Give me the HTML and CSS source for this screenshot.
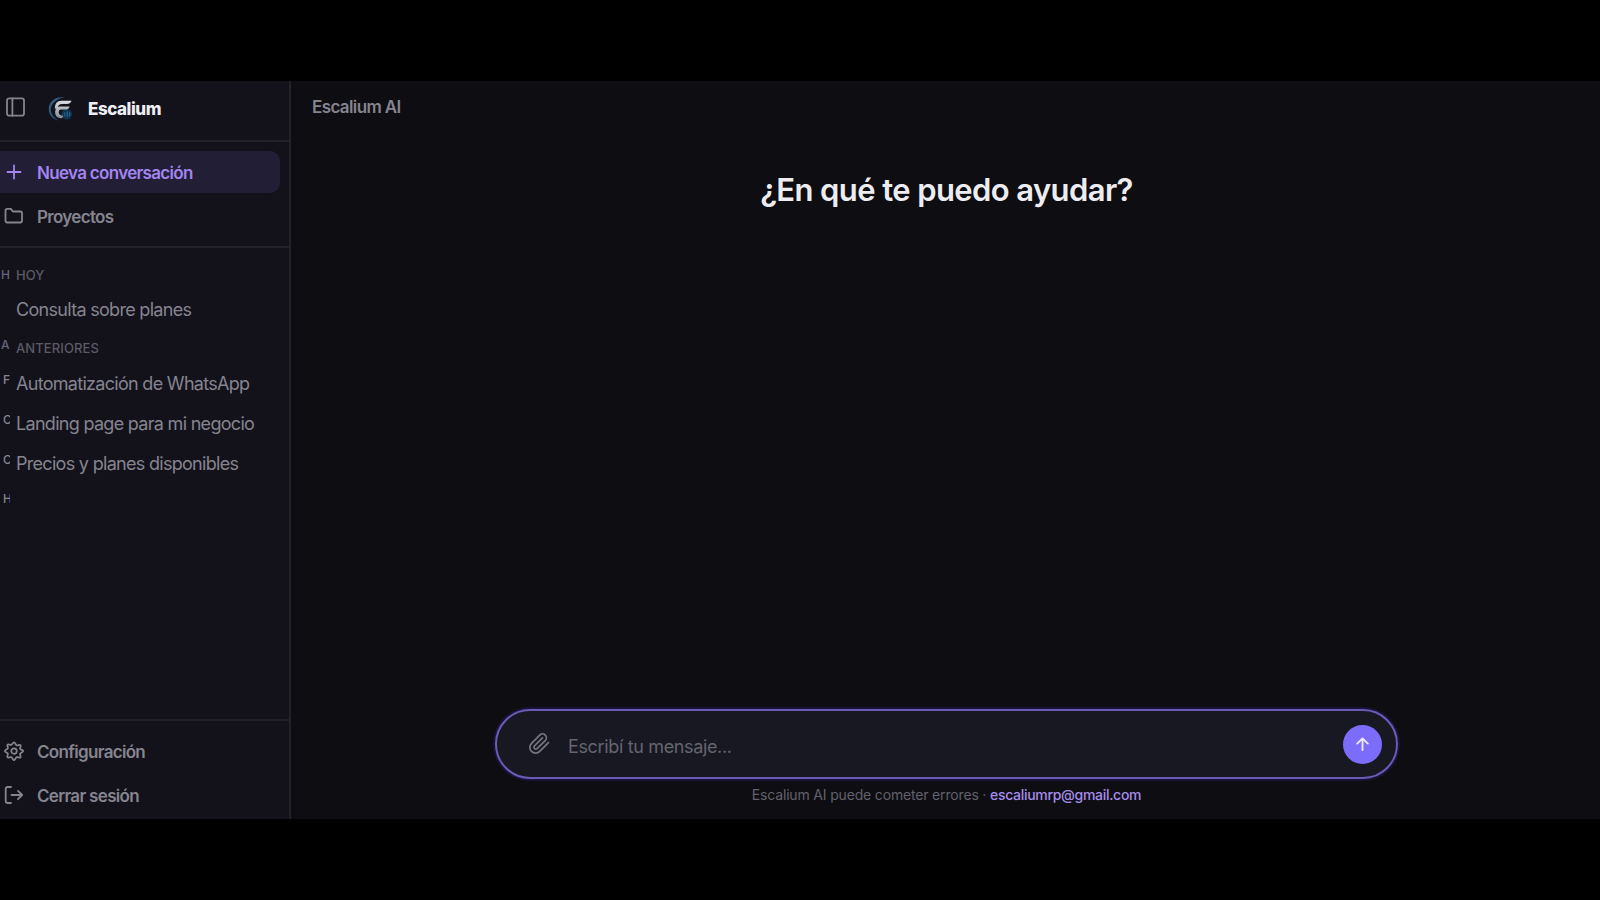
FILE: index.html
```html
<!DOCTYPE html>
<html lang="es">
<head>
<meta charset="utf-8">
<title>Escalium AI</title>
<link rel="stylesheet" href="styles.css">
</head>
<body>
<div class="app">
  <aside class="sidebar">
    <header class="brand">
      <svg class="icon panel" viewBox="0 0 20 20"><rect x="1" y="1.300" width="17" height="17.400" rx="2.200"/><path d="M6.400 1.300v17.400"/></svg>
      <svg class="logo" viewBox="0 0 26 28">
        <defs>
          <linearGradient id="ring" x1="0" y1="0" x2="1" y2="1"><stop offset="0" stop-color="#3c647f"/><stop offset=".5" stop-color="#28577b"/><stop offset="1" stop-color="#123047"/></linearGradient>
          <linearGradient id="metal" x1="0" y1="0" x2="0" y2="1"><stop offset="0" stop-color="#d8dce2"/><stop offset="1" stop-color="#858c96"/></linearGradient>
        </defs>
        <path d="M17 1.500C9 -.2 1 5 .8 13c-.2 6.500 4 11 10 12.500C5.500 21.500 2.200 17.500 3 12.500 4 7 10 2.500 17 1.500Z" fill="url(#ring)"/>
        <circle cx="19.500" cy="19" r="5.500" fill="#113450"/>
        <path d="M24.500 5C23.500 7.500 22 8.300 20 8.300h-5.500c-3 0-3.600 1.300-4.500 4.200l-3 .8C7.200 8 9.500 5 14 5ZM22.500 11c-.8 2.100-1.800 2.900-3.500 2.900h-5c-2 0-2.800.8-2.800 2.600 0 2.700 1.500 3.800 4.800 4l-1.500 2.500c-4.500 0-7-2.300-7-6 0-3.800 2-6 5.500-6Z" fill="url(#metal)"/>
        <path d="M17.500 17v4M20 16v6M22.500 17v4" stroke="#2b6f96" stroke-width="1"/>
      </svg>
      <span class="brand-name">Escalium</span>
    </header>
    <nav class="nav">
      <a class="item active"><svg class="icon" viewBox="0 0 20 20"><path d="M10 3.500v13M3.500 10h13"/></svg><span>Nueva conversación</span></a>
      <a class="item"><svg class="icon" viewBox="0 0 20 20"><path d="M1.500 14.800V4.600c0-1 .7-1.700 1.700-1.700h3.700l2 2.600h7.400c1 0 1.700.7 1.700 1.700v7.600c0 1-.7 1.700-1.700 1.700H3.200c-1 0-1.700-.7-1.700-1.700Z"/></svg><span>Proyectos</span></a>
    </nav>
    <section class="history">
      <div class="row label hoy"><span class="mark">H</span><span>HOY</span></div>
      <div class="row chat"><span class="mark"></span><span>Consulta sobre planes</span></div>
      <div class="row label"><span class="mark">A</span><span class="lower">ANTERIORES</span></div>
      <div class="row chat"><span class="mark cut">F</span><span>Automatización de WhatsApp</span></div>
      <div class="row chat"><span class="mark cut">C</span><span>Landing page para mi negocio</span></div>
      <div class="row chat"><span class="mark cut">C</span><span>Precios y planes disponibles</span></div>
      <div class="row chat last"><span class="mark cut">H</span></div>
    </section>
    <nav class="account">
      <a class="item"><svg class="icon gear" viewBox="0 0 24 24"><path d="M12 1.700c1.700 0 1.700 3 3.200 3.600s3.300-1.400 4.500-.3-.9 3-.3 4.500 3.600.8 3.600 2.500-3 1.700-3.600 3.200 1.400 3.300.3 4.500-3-.9-4.500-.3-1.500 3.600-3.200 3.600-1.700-3-3.200-3.600-3.300 1.400-4.500.3.900-3 .3-4.500S1 13.700 1 12s3-1.700 3.600-3.200S3.200 5.500 4.300 4.300s3 .9 4.500.3S10.300 1.700 12 1.700Z"/><circle cx="12" cy="12" r="3.300"/></svg><span>Configuración</span></a>
      <a class="item"><svg class="icon" viewBox="0 0 20 20"><path d="M7 2H3.800C2.500 2 1.700 2.800 1.700 4v12c0 1.200.8 2 2.100 2H7M7.500 10H18M14 5.800l4.200 4.200-4.200 4.200"/></svg><span>Cerrar sesión</span></a>
    </nav>
  </aside>
  <main class="main">
    <div class="topbar">Escalium AI</div>
    <h1 class="title">¿En qué te puedo ayudar?</h1>
    <div class="composer">
      <svg class="clip" viewBox="0 0 24 24"><path d="m21.400 11.100-9.200 9.200a6 6 0 0 1-8.500-8.500l8.600-8.600a4 4 0 0 1 5.700 5.700l-8.600 8.500a2 2 0 0 1-2.800-2.800l8.500-8.500"/></svg>
      <span class="placeholder">Escribí tu mensaje...</span>
      <button class="send" aria-label="Enviar"><svg viewBox="0 0 16 16"><path d="M8 14.500V2M2.300 7.600 8 2l5.700 5.600"/></svg></button>
    </div>
    <p class="note">Escalium AI puede cometer errores · <a class="mail">escaliumrp@gmail.com</a></p>
  </main>
</div>
</body>
</html>
```
FILE: styles.css
```css
* { box-sizing: border-box; }
body {
  margin: 0;
  height: 900px;
  padding: 81px 0;
  overflow: hidden;
  background: #000;
  font-family: Inter, "Liberation Sans", sans-serif;
  color: #85848f;
}
.app { display: flex; height: 738px; background: #0e0d12; }
.sidebar {
  display: flex;
  flex-direction: column;
  width: 291px;
  flex: none;
  background: #13121b;
  border-right: 2px solid #232229;
}
.icon {
  width: 20px;
  height: 20px;
  flex: none;
  fill: none;
  stroke: currentColor;
  stroke-width: 1.8;
  stroke-linecap: round;
  stroke-linejoin: round;
}
.gear { stroke-width: 2.1; }
.panel { margin-top: -1px; }
.brand {
  display: flex;
  align-items: center;
  height: 61px;
  padding: 0 0 6px 6px;
  border-bottom: 2px solid #232229;
}
.logo { width: 25px; height: 27px; margin: 3px 0 0 22px; }
.brand-name { margin: 3px 0 0 15px; font-size: 17px; font-weight: 800; color: #ededf3; letter-spacing: -0.45px; }
.nav { height: 106px; padding-top: 9px; border-bottom: 2px solid #232229; }
.item {
  display: flex;
  align-items: center;
  gap: 13px;
  width: 280px;
  height: 42px;
  margin-bottom: 2px;
  padding-left: 4px;
  font-size: 17px;
  font-weight: 600;
  letter-spacing: -0.68px;
  white-space: nowrap;
}
.item span { margin-top: 2px; }
.active { background: #221e36; color: #a285ee; border-radius: 0 10px 10px 0; }
.history { flex: 1; padding-top: 14px; }
.row { display: flex; align-items: center; height: 40px; white-space: nowrap; }
.label { height: 34px; font-size: 13px; font-weight: 500; letter-spacing: 0.1px; color: #5b5a65; }
.hoy { height: 26px; }
.chat { font-size: 18px; letter-spacing: -0.7px; }
.chat span + span { margin-top: 2px; }
.lower { margin-top: 5px; }
.mark {
  width: 10px;
  margin: -2px 6px 0 0;
  padding-left: 1px;
  font-size: 12px;
  font-weight: 500;
  letter-spacing: 0;
  color: #67647c;
}
.cut { padding-left: 3px; margin-top: -6px; overflow: hidden; color: #85848f; }
.last { height: 38px; }
.account { height: 100px; padding-top: 9px; border-top: 2px solid #232229; }
.main { display: flex; flex: 1; flex-direction: column; align-items: center; }
.topbar { align-self: stretch; height: 51px; padding: 16px 0 0 21px; font-size: 17px; line-height: 21px; font-weight: 600; letter-spacing: -0.62px; }
.title { margin: 38px 0 0 2px; font-size: 31px; line-height: 40px; font-weight: 600; letter-spacing: -0.6px; color: #ededf1; white-space: nowrap; }
.composer {
  display: flex;
  align-items: center;
  width: 903px;
  height: 70px;
  margin: auto 0 0 2px;
  padding: 0 14px 0 31px;
  border: 2px solid #6c5bb5;
  border-radius: 35px;
  background: #181822;
  box-shadow: 0 0 0 2px #19133a;
}
.clip { width: 23px; height: 23px; margin-top: -1px; fill: none; stroke: #777680; stroke-width: 1.8; stroke-linecap: round; stroke-linejoin: round; }
.placeholder { flex: 1; margin: 4px 0 0 17px; font-size: 18px; letter-spacing: -0.35px; color: #65646f; }
.send { display: grid; place-items: center; width: 39px; height: 39px; padding: 0; border: 0; border-radius: 50%; background: #7c6cfa; }
.send svg { width: 15px; height: 16px; fill: none; stroke: #efeafe; stroke-width: 2; stroke-linecap: round; stroke-linejoin: round; }
.note { margin: 7px 0 16px 2px; font-size: 14px; line-height: 17px; letter-spacing: -0.17px; color: #62616c; white-space: pre; }
.mail { color: #a68ded; font-weight: 500; letter-spacing: -0.3px; }
```
